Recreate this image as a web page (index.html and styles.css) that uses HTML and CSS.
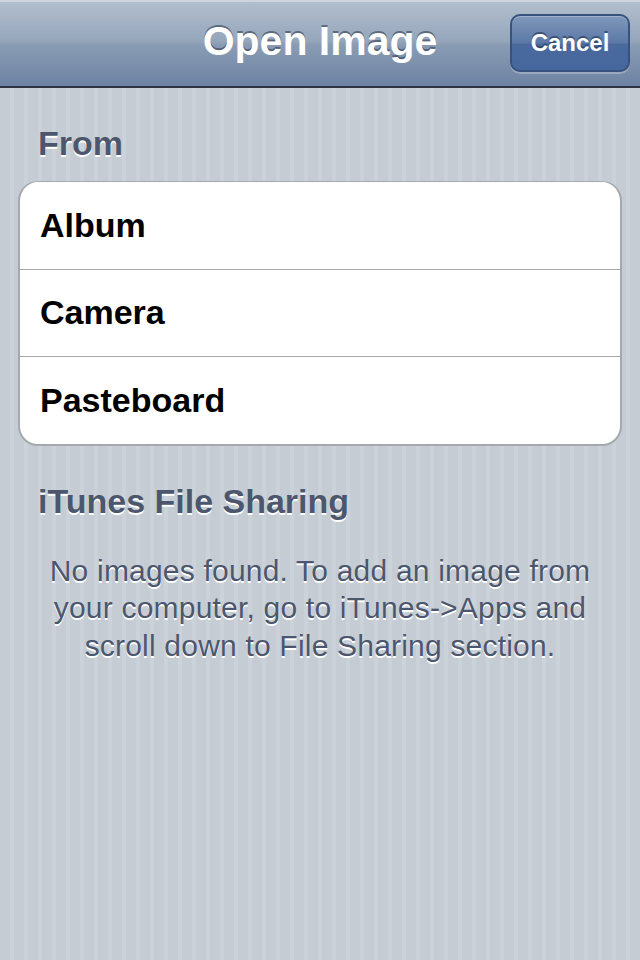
FILE: index.html
```html
<!DOCTYPE html>
<html>
<head>
<meta charset="utf-8">
<link rel="stylesheet" href="styles.css">
</head>
<body>
<header class="navbar">
  <h1 class="nav-title">Open Image</h1>
  <button class="nav-btn">Cancel</button>
</header>
<main class="content">
  <h2 class="section-head">From</h2>
  <ul class="group">
    <li class="row">Album</li>
    <li class="row">Camera</li>
    <li class="row">Pasteboard</li>
  </ul>
  <h2 class="section-head second">iTunes File Sharing</h2>
  <p class="note">No images found. To add an image from your computer, go to iTunes-&gt;Apps and scroll down to File Sharing section.</p>
</main>
</body>
</html>
```
FILE: styles.css
```css
html, body {
  margin: 0;
  padding: 0;
}
body {
  width: 640px;
  height: 960px;
  overflow: hidden;
  font-family: "Liberation Sans", Arial, sans-serif;
  background: repeating-linear-gradient(90deg, #c5ccd4 0 10px, #cbd2d9 10px 14px);
}
.navbar {
  height: 86px;
  border-bottom: 2px solid #2d3440;
  background: linear-gradient(#b3bfce 0%, #95a6bb 48%, #8a9cb4 52%, #6d83a2 100%);
  box-shadow: inset 0 2px 0 #cdd5df;
  display: flex;
  align-items: center;
  justify-content: center;
  position: relative;
}
.nav-title {
  margin: 0 0 3px 0;
  font-size: 41px;
  font-weight: bold;
  color: #fff;
  text-shadow: 0 -2px 0 rgba(40, 50, 70, 0.55);
}
.nav-btn {
  position: absolute;
  right: 10px;
  top: 14px;
  width: 120px;
  height: 58px;
  border: 2px solid #36527d;
  border-radius: 10px;
  background: linear-gradient(#7f97bb 0%, #5b78a6 50%, #4a6a9e 52%, #46679d 100%);
  box-shadow: 0 2px 0 rgba(255, 255, 255, 0.25), inset 0 1px 0 rgba(255, 255, 255, 0.25);
  color: #fff;
  font-family: "Liberation Sans", Arial, sans-serif;
  font-size: 24px;
  font-weight: bold;
  text-shadow: 0 -2px 0 rgba(20, 35, 60, 0.5);
  padding: 0;
}
.content {
  padding: 0 18px;
}
.section-head {
  margin: 0;
  padding: 37px 0 0 20px;
  height: 55px;
  box-sizing: border-box;
  font-size: 34px;
  font-weight: bold;
  line-height: 36px;
  color: #4c566c;
  text-shadow: 0 2px 0 #fff;
}
.section-head.second {
  padding-top: 37px;
  height: 93px;
  margin-top: 0;
}
.group {
  list-style: none;
  margin: 38px 0 0 0;
  padding: 0;
  background: #fff;
  border-style: solid;
  border-color: #a5a8ad;
  border-width: 1px 2px 2px 2px;
  border-radius: 20px;
  overflow: hidden;
}
.row {
  height: 86.5px;
  display: flex;
  align-items: center;
  padding-left: 20px;
  font-size: 34px;
  font-weight: bold;
  color: #000;
  border-top: 1.5px solid #a9a9a9;
}
.row:first-child {
  border-top: none;
}
.note {
  margin: 13px 0 0 0;
  padding: 0 8px;
  text-align: center;
  font-size: 30px;
  line-height: 37.5px;
  letter-spacing: 0.2px;
  color: #4c566c;
  text-shadow: 0 2px 0 #fff;
}
```
